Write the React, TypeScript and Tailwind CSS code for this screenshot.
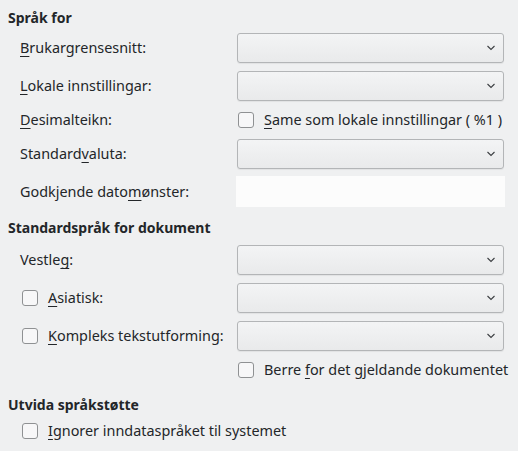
import React from "react";

const U = ({ c }: { c: string }) => (
  <span className="underline decoration-1 underline-offset-[3px]">{c}</span>
);

const Chevron = () => (
  <svg width="10" height="6" viewBox="0 0 10 6" className="absolute right-[7px] top-1/2 -translate-y-1/2">
    <path d="M1.5 1 L5 4.5 L8.5 1" fill="none" stroke="#3b3e41" strokeWidth="1.1" />
  </svg>
);

const Combo = () => (
  <div className="relative h-[30px] w-[267px] rounded-[3px] border border-[#b3b5b7] bg-gradient-to-b from-[#f3f4f5] to-[#e9eaeb] shadow-[0_1px_1px_rgba(0,0,0,0.06)]">
    <Chevron />
  </div>
);

const Check = () => (
  <div className="h-4 w-4 shrink-0 rounded-[3px] border border-[#8f9193] bg-[#f7f7f8]" />
);

const Row = ({
  mt,
  h,
  left,
  right,
}: {
  mt: string;
  h: string;
  left: React.ReactNode;
  right?: React.ReactNode;
}) => (
  <div className={`flex items-center pl-3 ${mt} ${h}`}>
    <div className="w-[217px] shrink-0 flex items-center">{left}</div>
    {right}
  </div>
);

export default function App() {
  return (
    <div
      className="w-[518px] h-[451px] overflow-hidden bg-[#eff0f1] pl-2 pt-2 text-[14.4px] leading-5 text-[#232629]"
      style={{ fontFamily: '"Noto Sans", sans-serif' }}
    >
      <div className="h-5 text-[14px] font-bold flex items-center">Språk for</div>
      <Row
        mt="mt-[5px]"
        h="h-[29px]"
        left={<span><U c="B" />rukargrensesnitt:</span>}
        right={<Combo />}
      />
      <Row
        mt="mt-[9px]"
        h="h-[29px]"
        left={<span><U c="L" />okale innstillingar:</span>}
        right={<Combo />}
      />
      <Row
        mt="mt-[10px]"
        h="h-5"
        left={<span><U c="D" />esimalteikn:</span>}
        right={
          <div className="flex items-center gap-[10px] pl-[1px]">
            <Check />
            <span><U c="S" />ame som lokale innstillingar ( %1 )</span>
          </div>
        }
      />
      <Row
        mt="mt-[9px]"
        h="h-[30px]"
        left={<span>Standard<U c="v" />aluta:</span>}
        right={<Combo />}
      />
      <Row
        mt="mt-[7px]"
        h="h-[31px]"
        left={<span>Godkjende dato<U c="m" />ønster:</span>}
        right={<div className="-ml-px h-[31px] w-[269px] bg-[#fcfcfc]" />}
      />
      <div className="mt-[11px] h-5 text-[14px] font-bold flex items-center">Standardspråk for dokument</div>
      <Row
        mt="mt-[7px]"
        h="h-[30px]"
        left={<span>Vestle<U c="g" />:</span>}
        right={<Combo />}
      />
      <Row
        mt="mt-[8px]"
        h="h-[30px]"
        left={
          <div className="flex items-center gap-[10px] pl-[2px]">
            <Check />
            <span><U c="A" />siatisk:</span>
          </div>
        }
        right={<Combo />}
      />
      <Row
        mt="mt-[8px]"
        h="h-[30px]"
        left={
          <div className="flex items-center gap-[10px] pl-[2px]">
            <Check />
            <span><U c="K" />ompleks tekstutforming:</span>
          </div>
        }
        right={<Combo />}
      />
      <Row
        mt="mt-[9px]"
        h="h-5"
        left={<span />}
        right={
          <div className="flex items-center gap-[10px] pl-[1px]">
            <Check />
            <span>Berre <U c="f" />or det gjeldande dokumentet</span>
          </div>
        }
      />
      <div className="mt-[15px] h-5 text-[14px] font-bold flex items-center">Utvida språkstøtte</div>
      <div className="mt-[6px] h-5 pl-3 flex items-center">
        <div className="flex items-center gap-[10px] pl-[2px]">
          <Check />
          <span><U c="I" />gnorer inndataspråket til systemet</span>
        </div>
      </div>
    </div>
  );
}
